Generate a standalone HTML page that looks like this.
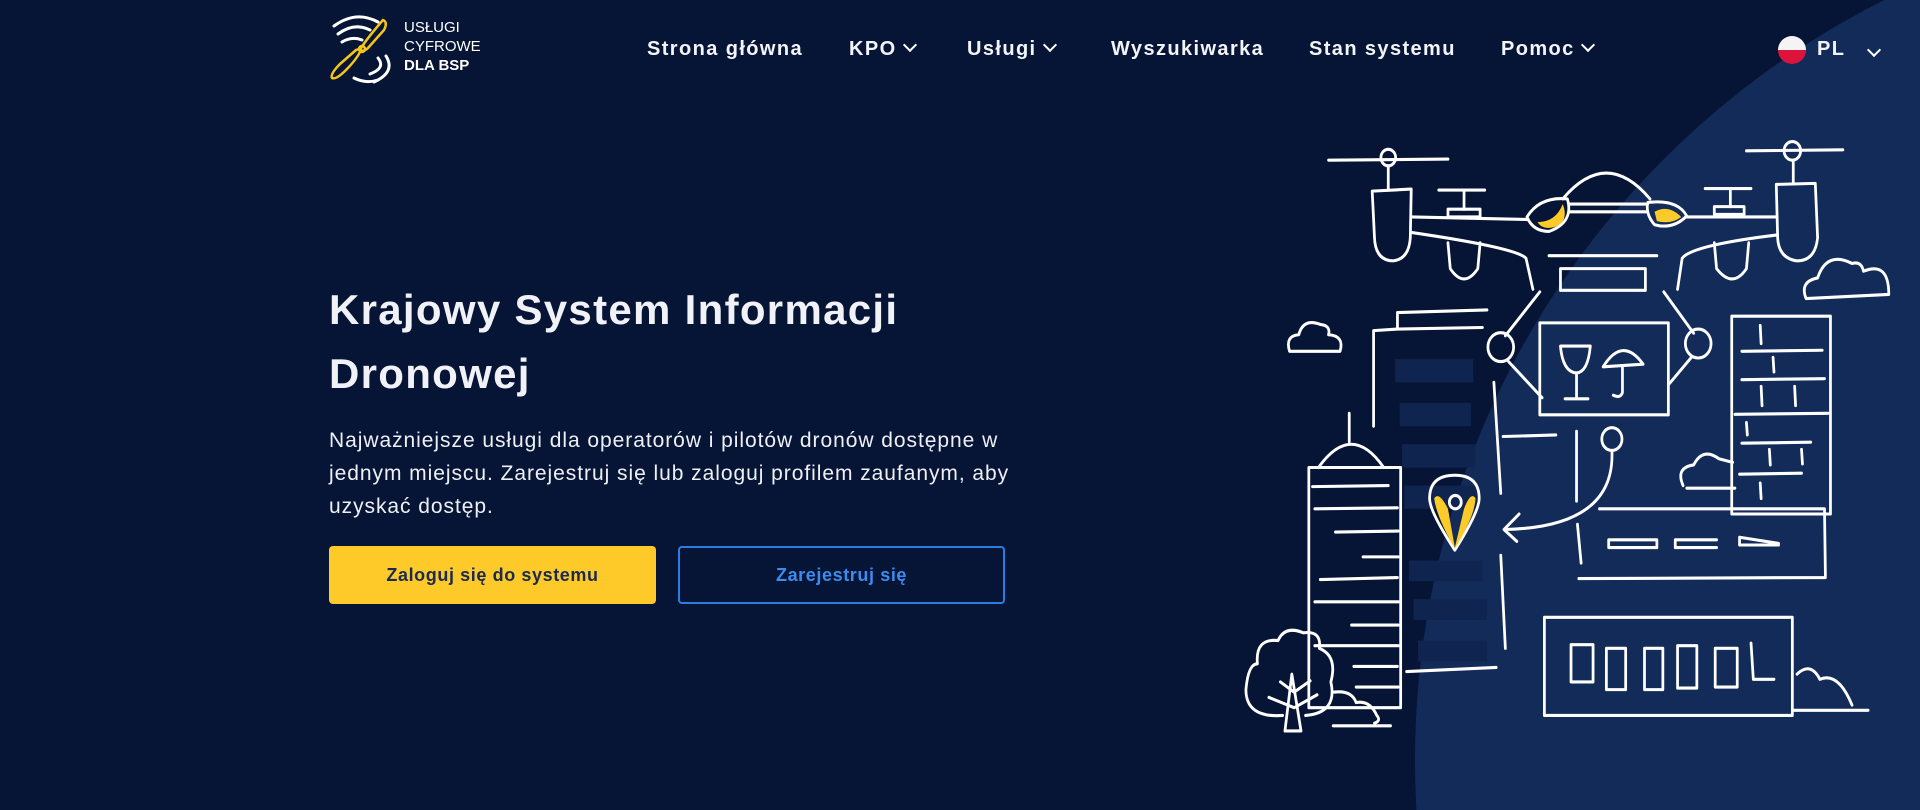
<!DOCTYPE html>
<html><head><meta charset="utf-8"><style>
html,body{margin:0;padding:0;overflow:hidden;height:810px}
body{width:1920px;height:810px;overflow:hidden;background:#061535;position:relative;font-family:"Liberation Sans",sans-serif;color:#fff}
.a{position:absolute;white-space:nowrap}
.nav{font-weight:bold;font-size:20px;top:38px;color:#f2f4f8;letter-spacing:1.4px}
.chev{display:inline-block;width:8px;height:8px;border-right:2.5px solid #fff;border-bottom:2.5px solid #fff;transform:rotate(45deg);margin-left:8px;position:relative;top:-5px}
h1{position:absolute;left:329px;top:278px;margin:0;font-size:42px;line-height:64px;font-weight:bold;color:#f0f2f7;letter-spacing:1.3px}
p.t{position:absolute;left:329px;top:424px;margin:0;font-size:21px;line-height:33px;color:#eef0f5;letter-spacing:0.95px}
.btn{position:absolute;top:546px;height:58px;width:327px;box-sizing:border-box;border-radius:4px;font-weight:bold;font-size:18px;display:flex;align-items:center;justify-content:center;letter-spacing:0.6px}
</style></head><body>
<svg class="a" style="left:0;top:0" width="1920" height="810"><circle cx="2265" cy="760" r="850" fill="#132b58"/></svg>

<svg class="a" style="left:326px;top:12px" width="76" height="74" viewBox="0 0 76 74">
<g fill="none" stroke="#fff" stroke-width="3" stroke-linecap="round">
<path d="M8 14 Q30 -2 52 10"/><path d="M12 22 Q28 10 44 18"/><path d="M16 30 Q26 24 36 28"/>
<path d="M60 44 Q70 60 48 70"/><path d="M52 46 Q60 56 44 62"/><path d="M28 66 Q40 72 52 68"/>
</g>
<g fill="none" stroke="#f5c518" stroke-width="2.5" stroke-linejoin="round">
<path d="M57 8 Q62 10 58 18 L42 36 Q38 40 34 38 Q38 30 57 8Z"/>
<path d="M34 40 Q30 48 20 58 Q10 68 6 66 Q4 62 14 52 L30 38 Q34 36 34 40Z"/>
<circle cx="36" cy="37" r="3"/>
</g></svg>
<div class="a" style="left:404px;top:18px;font-size:15px;line-height:19px;color:#fff">USŁUGI<br>CYFROWE<br><b>DLA BSP</b></div>

<div class="a nav" style="left:647px">Strona główna</div>
<div class="a nav" style="left:849px">KPO<span class="chev"></span></div>
<div class="a nav" style="left:967px">Usługi<span class="chev"></span></div>
<div class="a nav" style="left:1111px">Wyszukiwarka</div>
<div class="a nav" style="left:1309px">Stan systemu</div>
<div class="a nav" style="left:1501px">Pomoc<span class="chev"></span></div>
<svg class="a" style="left:1777px;top:35px" width="30" height="30" viewBox="0 0 30 30"><clipPath id="c"><circle cx="15" cy="15" r="14"/></clipPath><g clip-path="url(#c)"><rect width="30" height="15" fill="#f4f4f4"/><rect y="15" width="30" height="15" fill="#dc143c"/></g></svg>
<div class="a nav" style="left:1817px">PL</div>
<span class="a chev" style="left:1861px;top:42px"></span>

<h1>Krajowy System Informacji<br>Dronowej</h1>
<p class="t">Najważniejsze usługi dla operatorów i pilotów dronów dostępne w<br>jednym miejscu. Zarejestruj się lub zaloguj profilem zaufanym, aby<br>uzyskać dostęp.</p>
<div class="btn" style="left:329px;background:#fdca2a;color:#1b2a4e">Zaloguj się do systemu</div>
<div class="btn" style="left:678px;border:2px solid #2a7de1;color:#3b8cf0">Zarejestruj się</div>

<svg class="a" style="left:1200px;top:0" width="720" height="810" viewBox="0 0 1568 1568" preserveAspectRatio="none">
<g fill="#0f2550">
<rect x="425" y="695" width="170" height="45"/><rect x="435" y="780" width="155" height="45"/><rect x="440" y="860" width="160" height="45"/><rect x="445" y="940" width="160" height="45"/><rect x="455" y="1085" width="160" height="40"/><rect x="465" y="1160" width="160" height="40"/><rect x="475" y="1240" width="150" height="40"/>
</g>
<g fill="none" stroke="#fff" stroke-width="6" stroke-linecap="round" stroke-linejoin="round">
<path d="M280 310 L540 308"/><circle cx="410" cy="305" r="16"/><path d="M410 321 L410 368"/>
<path d="M375 370 L460 366 L458 460 Q455 502 420 505 Q382 504 380 460 Z"/>
<path d="M520 368 L620 368 M575 368 L575 405"/><rect x="540" y="405" width="70" height="15"/>
<path d="M540 470 L545 520 Q575 560 605 520 L610 470"/>
<path d="M1190 292 L1400 290"/><circle cx="1290" cy="292" r="18"/><path d="M1292 310 L1292 355"/>
<path d="M1255 357 L1340 355 L1345 460 Q1340 505 1300 505 Q1260 500 1258 460 Z"/>
<path d="M1100 365 L1200 365 M1155 365 L1155 400"/><rect x="1120" y="400" width="65" height="15"/>
<path d="M1120 470 L1125 520 Q1160 560 1190 520 L1195 470"/>
<path d="M460 420 L715 425"/><path d="M460 450 Q690 480 710 500 L725 560"/>
<path d="M1060 420 L1255 420"/><path d="M1255 455 Q1070 475 1050 500 L1040 560"/>
<path d="M790 385 Q885 285 980 385"/>
<path d="M712 420 Q740 380 800 385 Q815 430 760 448 Q725 448 712 420Z"/>
<path d="M735 430 Q775 430 790 395 Q805 430 770 440 Q745 445 735 430Z" fill="#fdca2a" stroke="none"/>
<path d="M975 392 Q1040 385 1060 418 Q1030 445 990 435 Q970 415 975 392Z"/>
<path d="M990 410 Q1020 395 1048 420 Q1025 435 995 428Z" fill="#fdca2a" stroke="none"/>
<path d="M805 395 L975 395 M805 410 L975 410"/>
<path d="M760 495 L995 495"/><rect x="785" y="520" width="185" height="42"/>
<path d="M740 565 L665 650"/><circle cx="655" cy="672" r="28"/><path d="M672 700 L745 770"/>
<path d="M1010 565 L1075 645"/><circle cx="1085" cy="665" r="28"/><path d="M1070 692 L1020 745"/>
<rect x="740" y="625" width="280" height="178"/>
<path d="M785 670 L850 670 Q845 720 820 722 Q790 720 785 670Z M820 722 L820 770 M795 772 L845 772"/>
<path d="M878 710 Q920 650 965 705 Z M920 710 L920 760 Q915 772 900 765"/>
<path d="M378 825 L378 640 L430 637 L430 605 L625 600 M430 637 L615 634"/>
<path d="M640 740 L655 955 M655 1075 L665 1255 M450 1300 L645 1292"/>
<path d="M325 800 L325 855 M258 905 Q330 815 400 905"/>
<rect x="237" y="905" width="200" height="465"/>
<path d="M245 942 L410 940 M250 985 L430 983 M295 1030 L432 1028 M355 1078 L432 1078 M262 1122 L430 1118 M250 1165 L432 1165 M330 1210 L432 1210 M250 1250 L432 1250 M335 1290 L430 1290 M340 1330 L432 1330"/>
<rect x="1158" y="612" width="215" height="383"/>
<path d="M1180 680 L1355 678 M1180 735 L1360 733 M1165 802 L1368 800 M1180 858 L1330 856 M1175 918 L1310 916 M1220 630 L1222 665 M1248 692 L1250 720 M1222 748 L1224 785 M1295 748 L1297 785 M1190 818 L1192 842 M1240 870 L1242 900 M1310 870 L1312 898 M1220 935 L1222 965"/>
<path d="M870 985 L1360 985 L1362 1115 M825 1120 L1362 1118 M822 1015 L830 1090"/>
<path d="M890 1045 L995 1045 L995 1060 L890 1060 Z M1035 1045 L1125 1045 M1035 1060 L1125 1060 M1035 1045 L1035 1060 M1175 1040 L1260 1052 M1175 1040 L1175 1055 L1260 1055"/>
<path d="M660 845 L775 842 M820 835 L820 970"/>
<rect x="750" y="1195" width="540" height="190"/>
<path d="M1290 1375 L1455 1375 M1300 1305 Q1330 1280 1350 1315 Q1390 1300 1420 1365"/>
<rect x="808" y="1248" width="48" height="72"/><rect x="885" y="1255" width="42" height="80"/><rect x="968" y="1255" width="40" height="80"/><rect x="1040" y="1250" width="42" height="82"/><rect x="1122" y="1255" width="48" height="75"/><path d="M1200 1245 L1205 1315 L1250 1315"/>
<path d="M195 680 Q185 650 215 648 Q225 615 262 628 Q285 630 280 648 Q315 650 305 680 Z"/>
<path d="M1320 578 Q1305 545 1345 538 Q1365 485 1420 510 Q1440 505 1445 525 Q1500 505 1500 570 Z"/>
<path d="M1052 940 Q1035 905 1075 900 Q1095 865 1130 888 L1160 895 M1060 945 L1165 945"/>
<path d="M555 1065 Q500 990 500 965 Q500 920 555 920 Q608 920 608 965 Q608 990 555 1065Z"/>
<path d="M510 965 Q520 950 540 985 L555 1060 L575 985 Q590 950 600 965 Q598 1000 555 1062 Q515 1000 510 965Z" fill="#fdca2a" stroke="none"/>
<circle cx="556" cy="972" r="13"/>
<circle cx="897" cy="850" r="22"/><path d="M897 872 Q905 1020 665 1025 M695 995 L662 1025 L690 1048"/>
<path d="M185 1415 L200 1305 L220 1415 Z M150 1350 L205 1370 L255 1345 M175 1320 L205 1340 L240 1318"/>
<path d="M180 1385 Q100 1390 100 1335 Q105 1285 125 1285 Q120 1235 170 1240 Q185 1210 225 1225 Q265 1220 260 1255 Q300 1270 285 1320 Q300 1380 230 1385"/>
<path d="M290 1340 Q330 1335 340 1360 Q370 1355 385 1385 Q395 1395 380 1400 M290 1405 L415 1405"/>
</g>
</svg>
</body></html>
